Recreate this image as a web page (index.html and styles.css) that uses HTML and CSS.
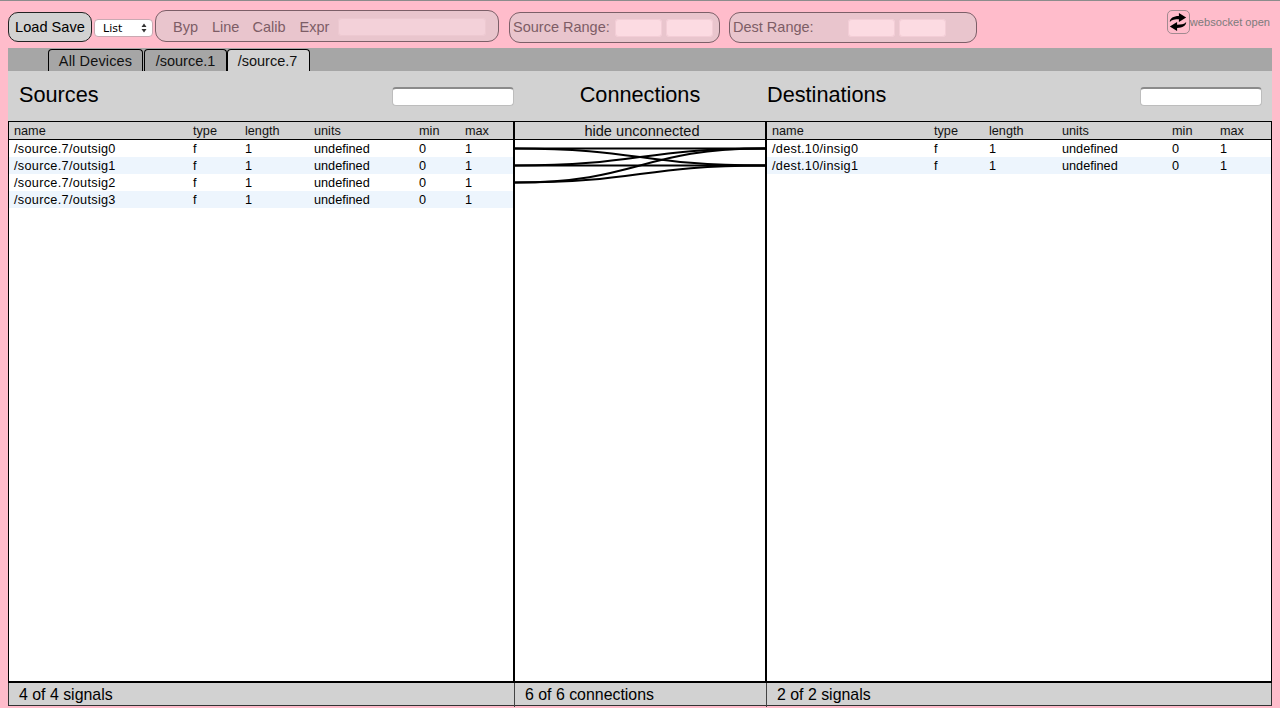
FILE: index.html
```html
<!DOCTYPE html>
<html lang="en">
<head>
<meta charset="utf-8">
<title>Mapper</title>
<link rel="stylesheet" href="styles.css">
</head>
<body>
<div class="topbar">
  <button class="loadsave">Load Save</button>
  <div class="viewselect"><span>List</span><svg width="6" height="10" viewBox="0 0 6 10"><path d="M3 0.5 5.500 4H.5zM3 9.500 .5 6h5z" fill="#333"/></svg></div>
  <div class="group modes">
    <span class="mode m1">Byp</span><span class="mode m2">Line</span><span class="mode m3">Calib</span><span class="mode m4">Expr</span>
    <span class="field exprfield"></span>
  </div>
  <div class="group range src">
    <span class="rlabel">Source Range:</span><span class="field num"></span><span class="field num"></span>
  </div>
  <div class="group range dst">
    <span class="rlabel dlabel">Dest Range:</span><span class="field num"></span><span class="field num"></span>
  </div>
  <div class="status">
    <span class="refresh"><svg width="20" height="22" viewBox="0 0 22 22"><path d="M2 11C2 7 6 4.500 12 4.500V1l8 5-8 5V8C8 8 4 8.500 2 11z" fill="#000"/><path d="M20 11c0 4-4 6.500-10 6.500V21l-8-5 8-5v3c4 0 8-.5 10-3z" fill="#000"/></svg></span>
    <span class="wstext">websocket open</span>
  </div>
</div>
<div class="main">
  <div class="tabs">
    <span class="tab t1">All Devices</span><span class="tab t2">/source.1</span><span class="tab t3 active">/source.7</span>
  </div>
  <div class="titles">
    <div class="tcol"><h2>Sources</h2><span class="search"></span></div>
    <div class="tcol mid"><h2>Connections</h2></div>
    <div class="tcol"><h2>Destinations</h2><span class="search"></span></div>
  </div>
  <div class="panes">
    <div class="pane">
      <div class="row head srcgrid"><span>name</span><span>type</span><span>length</span><span>units</span><span>min</span><span>max</span></div>
      <div class="row srcgrid"><span>/source.7/outsig0</span><span>f</span><span>1</span><span>undefined</span><span>0</span><span>1</span></div>
      <div class="row alt srcgrid"><span>/source.7/outsig1</span><span>f</span><span>1</span><span>undefined</span><span>0</span><span>1</span></div>
      <div class="row srcgrid"><span>/source.7/outsig2</span><span>f</span><span>1</span><span>undefined</span><span>0</span><span>1</span></div>
      <div class="row alt srcgrid"><span>/source.7/outsig3</span><span>f</span><span>1</span><span>undefined</span><span>0</span><span>1</span></div>
    </div>
    <div class="pane center">
      <div class="row head hide">hide unconnected</div>
      <svg class="links" width="250" height="60" viewBox="0 0 250 60">
        <g fill="none" stroke="#000" stroke-width="2">
          <path d="M0 8.500C125 8.500 125 8.500 250 8.500"/>
          <path d="M0 8.500C125 8.500 125 25.500 250 25.500"/>
          <path d="M0 25.500C125 25.500 125 8.500 250 8.500"/>
          <path d="M0 25.500C125 25.500 125 25.500 250 25.500"/>
          <path d="M0 42.500C125 42.500 125 8.500 250 8.500"/>
          <path d="M0 42.500C125 42.500 125 25.500 250 25.500"/>
        </g>
      </svg>
    </div>
    <div class="pane">
      <div class="row head dstgrid"><span>name</span><span>type</span><span>length</span><span>units</span><span>min</span><span>max</span></div>
      <div class="row dstgrid"><span>/dest.10/insig0</span><span>f</span><span>1</span><span>undefined</span><span>0</span><span>1</span></div>
      <div class="row alt dstgrid"><span>/dest.10/insig1</span><span>f</span><span>1</span><span>undefined</span><span>0</span><span>1</span></div>
    </div>
  </div>
  <div class="footer">
    <div class="fcol">4 of 4 signals</div>
    <div class="fcol fdiv">6 of 6 connections</div>
    <div class="fcol fdiv">2 of 2 signals</div>
  </div>
</div>
</body>
</html>
```
FILE: styles.css
```css
* { box-sizing: border-box; }
html, body { height: 100%; }
body {
  margin: 0;
  background: #ffbccb;
  border-top: 1px solid #8c8c8c;
  font-family: "Liberation Sans", Arial, sans-serif;
  color: #000;
  overflow: hidden;
}
.topbar {
  height: 47px;
  padding: 9px 0 0 8px;
  display: flex;
  align-items: flex-start;
}
.loadsave {
  width: 84px;
  height: 30px;
  margin-top: 2px;
  padding: 0;
  border: 1px solid #222;
  border-radius: 10px;
  background: #d2d2d2;
  font: 14.6px "Liberation Sans", Arial, sans-serif;
  color: #000;
}
.viewselect {
  width: 59px;
  height: 18px;
  margin: 9px 0 0 2px;
  padding: 0 5px 0 8px;
  border-radius: 4px;
  border: 1px solid #c9a9b2;
  background: #fff;
  display: flex;
  align-items: center;
  justify-content: space-between;
  font: 11px "DejaVu Sans", sans-serif;
}
.group {
  height: 32px;
  border: 1px solid #7c5f68;
  border-radius: 11px;
  background: #e9c5cd;
  display: flex;
  align-items: center;
  color: #7d5d66;
  font-size: 14.5px;
}
.modes { width: 344px; margin-left: 2px; padding: 2px 0 0 17px; }
.mode { margin-right: 13px; }
.m1 { margin-right: 14px; }
.m3 { margin-right: 14px; }
.m4 { margin-right: 9px; }
.field {
  display: block;
  height: 18px;
  border-radius: 4px;
  background: #f3d1d9;
  box-shadow: inset 0 0 0 1px #edc9d1;
}
.exprfield { width: 148px; }
.range { padding-left: 3px; margin-top: 2px; height: 31px; }
.src { width: 211px; margin-left: 10px; }
.dst { width: 248px; margin-left: 9px; }
.rlabel { width: 102px; flex: none; white-space: nowrap; margin-bottom: 2px; }
.dlabel { width: 115px; }
.num { width: 47px; margin-right: 4px; background: #fcdbe2; box-shadow: inset 0 0 0 1px #f3cdd6; }
.status {
  margin-left: auto;
  margin-right: 10px;
  display: flex;
  align-items: center;
  height: 24px;
  color: #7b7b7b;
  font-size: 11.1px;
}
.refresh {
  width: 23px;
  height: 24px;
  border: 1px solid #a18a90;
  border-radius: 5px;
  display: flex;
  align-items: center;
  justify-content: center;
}
.wstext { margin-bottom: 1px; }
.main { margin: 0 8px; }
.tabs {
  height: 23px;
  background: #a6a6a6;
  padding-left: 40px;
  display: flex;
  align-items: flex-end;
}
.tab {
  height: 22px;
  padding-top: 3px;
  border: 1px solid #000;
  border-bottom: 0;
  border-radius: 4px 4px 0 0;
  font-size: 14.5px;
  line-height: 17px;
  text-align: center;
  color: #111;
}
.t1 { width: 95px; margin-right: 1px; letter-spacing: .15px; }
.t2 { width: 83px; }
.t3 { width: 83px; padding-right: 2px; }
.active { background: #d2d2d2; }
.titles {
  height: 50px;
  background: #d2d2d2;
  display: grid;
  grid-template-columns: 506px 252px 506px;
}
.tcol { display: flex; justify-content: space-between; align-items: center; padding-bottom: 3px; }
.tcol.mid { justify-content: center; }
.tcol:first-child { padding-left: 11px; }
.tcol:last-child { padding-left: 1px; padding-right: 10px; }
h2 { margin: 0; font-size: 21.7px; font-weight: 400; line-height: 27px; }
.search {
  width: 122px;
  height: 19px;
  margin-top: 4px;
  background: #fff;
  border: 1px solid #bdbdbd;
  border-top: 2px solid #8b8b8b;
  border-radius: 4px;
}
.panes {
  height: 562px;
  display: grid;
  grid-template-columns: 504px 254px 1fr;
  border: 1px solid #000;
  border-bottom-width: 2px;
  background: #fff;
}
.pane { min-width: 0; overflow: hidden; }
.center { border-left: 2px solid #000; border-right: 2px solid #000; position: relative; }
.row {
  height: 17px;
  display: grid;
  align-items: center;
  font-size: 12.7px;
  line-height: 15px;
  padding: 2px 0 0 5px;
  white-space: nowrap;
}
.row:not(.head) span:first-child { letter-spacing: .3px; }
.srcgrid { grid-template-columns: 179px 52px 69px 105px 46px 1fr; }
.dstgrid { grid-template-columns: 162px 55px 73px 110px 48px 1fr; }
.alt { background: #edf5fd; }
.head { height: 18px; background: #d2d2d2; border-bottom: 1px solid #000; color: #111; }
.hide { text-align: center; display: block; padding: 1px 0 0 4px; line-height: 16px; font-size: 14.6px; }
.links { position: absolute; left: 0; top: 18px; display: block; }
.footer {
  height: 23px;
  display: grid;
  grid-template-columns: 505px 252px 1fr;
  background: #d2d2d2;
  border: 1px solid #333;
  border-top: 0;
  font-size: 15.9px;
  line-height: 24px;
}
.fcol { padding-left: 10px; }
.fdiv { border-left: 1px solid #444; }
```
